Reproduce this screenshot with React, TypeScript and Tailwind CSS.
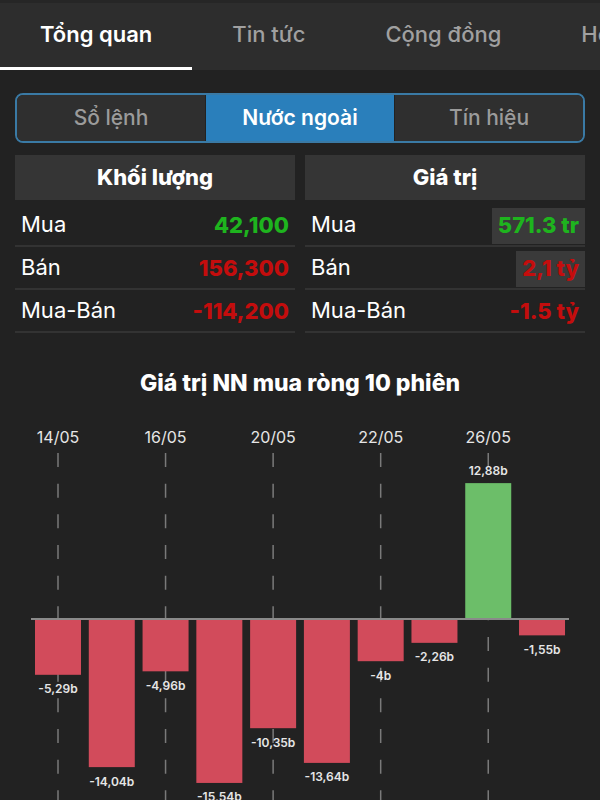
import React from "react";

const tabs = ["Tổng quan", "Tin tức", "Cộng đồng", "Hồ sơ"];

type Row = { label: string; value: string; color: string; box?: boolean };

const leftRows: Row[] = [
  { label: "Mua", value: "42,100", color: "text-[#1eb41e]" },
  { label: "Bán", value: "156,300", color: "text-[#c40d0d]" },
  { label: "Mua-Bán", value: "-114,200", color: "text-[#c40d0d]" },
];
const rightRows: Row[] = [
  { label: "Mua", value: "571.3 tr", color: "text-[#1eb41e]", box: true },
  { label: "Bán", value: "2,1 tỷ", color: "text-[#c40d0d]", box: true },
  { label: "Mua-Bán", value: "-1.5 tỷ", color: "text-[#c40d0d]" },
];

const bars = [
  { v: -5.29, t: "-5,29b" },
  { v: -14.04, t: "-14,04b" },
  { v: -4.96, t: "-4,96b" },
  { v: -15.54, t: "-15,54b" },
  { v: -10.35, t: "-10,35b" },
  { v: -13.64, t: "-13,64b" },
  { v: -4, t: "-4b" },
  { v: -2.26, t: "-2,26b" },
  { v: 12.88, t: "12,88b" },
  { v: -1.55, t: "-1,55b" },
];
const dates = ["14/05", "16/05", "20/05", "22/05", "26/05"];

function Column({ title, rows }: { title: string; rows: Row[] }) {
  return (
    <div className="flex flex-col">
      <div className="h-[45px] bg-[#353535] flex items-center justify-center text-white font-extrabold text-[22px]">
        {title}
      </div>
      <div className="mt-[4px] flex flex-col">
        {rows.map((r) => (
          <div
            key={r.label}
            className="h-[43px] border-b-2 border-[#333333] flex items-center justify-between pl-[6px]"
          >
            <span className="text-white text-[22px]">{r.label}</span>
            <span
              className={`h-[36px] mt-[2px] flex items-center px-[6px] font-extrabold text-[22px] ${r.color} ${
                r.box ? "bg-[#3a3a3a]" : ""
              }`}
            >
              {r.value}
            </span>
          </div>
        ))}
      </div>
    </div>
  );
}

function Chart() {
  const zero = 619;
  const k = 10.55;
  const centers = bars.map((_, i) => 58 + i * 53.78);
  return (
    <svg width="600" height="403" viewBox="0 397 600 403" className="block">
      {dates.map((d, i) => {
        const x = centers[i * 2];
        return (
          <g key={d}>
            <text
              x={x}
              y={437}
              textAnchor="middle"
              dominantBaseline="central"
              fontSize="16"
              fill="#e6e6e6"
              fontFamily="Inter, sans-serif"
            >
              {d}
            </text>
            <line
              x1={x}
              x2={x}
              y1={453}
              y2={800}
              stroke="#7a7a7a"
              strokeWidth="1.5"
              strokeDasharray="14 16.67"
            />
          </g>
        );
      })}
      {bars.map((b, i) => {
        const c = centers[i];
        const h = Math.abs(b.v) * k;
        const y = b.v < 0 ? zero : zero - h;
        const ly = b.v < 0 ? zero + h + 14 : zero - h - 13;
        return (
          <g key={i}>
            <rect x={c - 23} y={y} width={46} height={h} fill={b.v < 0 ? "#d24b5b" : "#6cbe69"} />
            <text
              x={c}
              y={ly}
              textAnchor="middle"
              dominantBaseline="central"
              fontSize="12"
              fontWeight="600"
              fill="#e6e6e6"
              fontFamily="Inter, sans-serif"
            >
              {b.t}
            </text>
          </g>
        );
      })}
      <line x1={31} x2={569} y1={zero} y2={zero} stroke="#8a8a8a" strokeWidth="2" />
    </svg>
  );
}

export default function App() {
  return (
    <div className="w-[600px] h-[800px] overflow-hidden bg-[#222222] font-['Inter',sans-serif]">
      <div className="h-[70px] bg-[#2d2d2d] border-t-[3px] border-[#262626] flex overflow-hidden whitespace-nowrap">
        {tabs.map((t, i) => (
          <div key={t} className="relative h-full px-10 pb-[4px] flex items-center shrink-0">
            <span
              className={`text-[22px] ${i === 0 ? "text-white font-semibold" : "text-[#a0a0a0] font-medium"}`}
            >
              {t}
            </span>
            {i === 0 && <div className="absolute left-0 right-0 bottom-0 h-[3px] bg-white" />}
          </div>
        ))}
      </div>

      <div className="px-[15px] pt-[23px]">
        <div className="h-[50px] flex border-2 border-[#3a7aa5] rounded-[8px] overflow-hidden">
          <div className="flex-1 bg-[#2f2f2f] border-r border-[#222222] flex items-center justify-center text-[21px] font-medium text-[#9b9b9b]">
            Sổ lệnh
          </div>
          <div className="flex-1 bg-[#2a7fbb] flex items-center justify-center text-[21px] font-semibold text-white">
            Nước ngoài
          </div>
          <div className="flex-1 bg-[#2f2f2f] border-l border-[#222222] flex items-center justify-center text-[21px] font-medium text-[#9b9b9b]">
            Tín hiệu
          </div>
        </div>
      </div>

      <div className="grid grid-cols-2 gap-x-[10px] px-[15px] mt-[12px]">
        <Column title="Khối lượng" rows={leftRows} />
        <Column title="Giá trị" rows={rightRows} />
      </div>

      <div className="mt-[36px] h-[28px] flex items-center justify-center text-white font-extrabold text-[23px]">
        Giá trị NN mua ròng 10 phiên
      </div>
      <Chart />
    </div>
  );
}
